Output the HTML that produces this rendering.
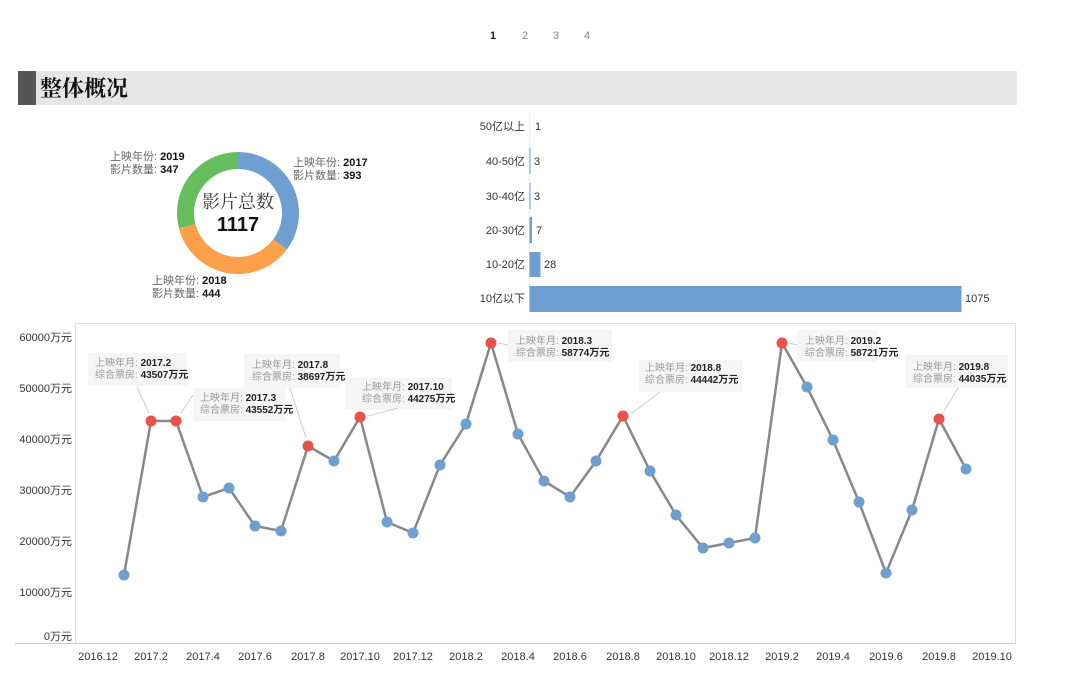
<!DOCTYPE html>
<html><head><meta charset="utf-8"><style>
html,body{margin:0;padding:0;background:#fff;width:1080px;height:685px;overflow:hidden}
svg{display:block;font-family:"Liberation Sans","Noto Sans CJK SC",sans-serif}
.ab text{font-size:10px}
</style></head><body>
<svg width="1080" height="685" viewBox="0 0 1080 685">
<g font-size="11" fill="#555" text-anchor="middle">
<text x="493" y="39" fill="#222" font-weight="bold">1</text>
<text x="525" y="39" fill="#888">2</text>
<text x="556" y="39" fill="#888">3</text>
<text x="587" y="39" fill="#888">4</text>
</g>
<rect x="18" y="71" width="999" height="34" fill="#e6e6e6"/>
<rect x="18" y="71" width="18" height="34" fill="#555"/>
<text x="40" y="96" font-size="22" font-weight="bold" fill="#111" font-family="'Noto Serif CJK SC','Liberation Serif',serif">整体概况</text>

<!-- donut -->
<g transform="translate(238,213)">
<path d="M0,-61 A61,61 0 0 1 48.8,36.6 L35.2,26.4 A44,44 0 0 0 0,-44 Z" fill="#6f9fd0"/>
<path d="M48.8,36.6 A61,61 0 0 1 -59.1,15.3 L-42.6,11.0 A44,44 0 0 0 35.2,26.4 Z" fill="#fda04c"/>
<path d="M-59.1,15.3 A61,61 0 0 1 0,-61 L0,-44 A44,44 0 0 0 -42.6,11.0 Z" fill="#66bd5e"/>
<text x="0" y="-5" text-anchor="middle" font-size="18" fill="#333" font-family="'Noto Serif CJK SC',serif">影片总数</text>
<text x="0" y="18" text-anchor="middle" font-size="20" font-weight="bold" fill="#111">1117</text>
</g>
<g font-size="11" fill="#666">
<text x="110" y="160">上映年份: <tspan fill="#111" font-weight="bold">2019</tspan></text>
<text x="110" y="173">影片数量: <tspan fill="#111" font-weight="bold">347</tspan></text>
<text x="293" y="166">上映年份: <tspan fill="#111" font-weight="bold">2017</tspan></text>
<text x="293" y="179">影片数量: <tspan fill="#111" font-weight="bold">393</tspan></text>
<text x="152" y="284">上映年份: <tspan fill="#111" font-weight="bold">2018</tspan></text>
<text x="152" y="297">影片数量: <tspan fill="#111" font-weight="bold">444</tspan></text>
</g>

<!-- bars -->
<g font-size="11" fill="#333">
<line x1="529.5" y1="112" x2="529.5" y2="314" stroke="#eee"/>
<text x="525" y="130" text-anchor="end">50亿以上</text><text x="535" y="130">1</text>
<rect x="529.5" y="148" width="1" height="26" fill="#6f9fd0"/>
<text x="525" y="165" text-anchor="end">40-50亿</text><text x="534" y="165">3</text>
<rect x="529.5" y="183" width="1" height="26" fill="#6f9fd0"/>
<text x="525" y="200" text-anchor="end">30-40亿</text><text x="534" y="200">3</text>
<rect x="529.5" y="217" width="2.5" height="26" fill="#6f9fd0"/>
<text x="525" y="234" text-anchor="end">20-30亿</text><text x="536" y="234">7</text>
<rect x="529.5" y="252" width="11" height="25" fill="#6f9fd0"/>
<text x="525" y="268" text-anchor="end">10-20亿</text><text x="544" y="268">28</text>
<rect x="529.5" y="286" width="432" height="26" fill="#6f9fd0"/>
<text x="525" y="302" text-anchor="end">10亿以下</text><text x="965" y="302">1075</text>
</g>

<!-- line chart frame -->
<rect x="75.5" y="323.5" width="940" height="320" fill="none" stroke="#ddd"/>
<line x1="15" y1="643.5" x2="1016" y2="643.5" stroke="#ccc"/>
<g font-size="11" fill="#333" text-anchor="end">
<text x="72" y="341">60000万元</text>
<text x="72" y="392">50000万元</text>
<text x="72" y="443">40000万元</text>
<text x="72" y="494">30000万元</text>
<text x="72" y="545">20000万元</text>
<text x="72" y="596">10000万元</text>
<text x="72" y="640">0万元</text>
</g>
<g font-size="11" fill="#333" text-anchor="middle">
<text x="98" y="660">2016.12</text><text x="151" y="660">2017.2</text><text x="203" y="660">2017.4</text>
<text x="255" y="660">2017.6</text><text x="308" y="660">2017.8</text><text x="360" y="660">2017.10</text>
<text x="413" y="660">2017.12</text><text x="466" y="660">2018.2</text><text x="518" y="660">2018.4</text>
<text x="570" y="660">2018.6</text><text x="623" y="660">2018.8</text><text x="676" y="660">2018.10</text>
<text x="729" y="660">2018.12</text><text x="782" y="660">2019.2</text><text x="833" y="660">2019.4</text>
<text x="886" y="660">2019.6</text><text x="939" y="660">2019.8</text><text x="992" y="660">2019.10</text>
</g>

<!-- annotation boxes -->
<g fill="#f5f5f5">
<rect x="88" y="353" width="99" height="33"/><rect x="193" y="388" width="92" height="33"/>
<rect x="244" y="354" width="96" height="34"/><rect x="345" y="378" width="107" height="32"/>
<rect x="508" y="330" width="104" height="32"/><rect x="638" y="360" width="104" height="32"/>
<rect x="797" y="330" width="80" height="32"/><rect x="905" y="355" width="103" height="33"/>
</g>
<g stroke="#ccc" fill="none">
<line x1="137" y1="387" x2="149" y2="413"/><line x1="193" y1="395" x2="181" y2="413"/>
<line x1="290" y1="388" x2="306" y2="438"/><line x1="398" y1="408" x2="368" y2="416"/>
<line x1="508" y1="345" x2="498" y2="343"/><line x1="660" y1="392" x2="631" y2="414"/>
<line x1="797" y1="345" x2="789" y2="343"/><line x1="958" y1="388" x2="944" y2="411"/>
</g>
<g class="ab" fill="#999">
<text x="95" y="366">上映年月: <tspan fill="#222" font-weight="bold">2017.2</tspan></text>
<text x="95" y="378">综合票房: <tspan fill="#222" font-weight="bold">43507万元</tspan></text>
<text x="200" y="401">上映年月: <tspan fill="#222" font-weight="bold">2017.3</tspan></text>
<text x="200" y="413">综合票房: <tspan fill="#222" font-weight="bold">43552万元</tspan></text>
<text x="252" y="368">上映年月: <tspan fill="#222" font-weight="bold">2017.8</tspan></text>
<text x="252" y="380">综合票房: <tspan fill="#222" font-weight="bold">38697万元</tspan></text>
<text x="362" y="390">上映年月: <tspan fill="#222" font-weight="bold">2017.10</tspan></text>
<text x="362" y="402">综合票房: <tspan fill="#222" font-weight="bold">44275万元</tspan></text>
<text x="516" y="344">上映年月: <tspan fill="#222" font-weight="bold">2018.3</tspan></text>
<text x="516" y="356">综合票房: <tspan fill="#222" font-weight="bold">58774万元</tspan></text>
<text x="645" y="371">上映年月: <tspan fill="#222" font-weight="bold">2018.8</tspan></text>
<text x="645" y="383">综合票房: <tspan fill="#222" font-weight="bold">44442万元</tspan></text>
<text x="805" y="344">上映年月: <tspan fill="#222" font-weight="bold">2019.2</tspan></text>
<text x="805" y="356">综合票房: <tspan fill="#222" font-weight="bold">58721万元</tspan></text>
<text x="913" y="370">上映年月: <tspan fill="#222" font-weight="bold">2019.8</tspan></text>
<text x="913" y="382">综合票房: <tspan fill="#222" font-weight="bold">44035万元</tspan></text>
</g>

<polyline fill="none" stroke="#888" stroke-width="2.5" points="124,575 151,421 176,421 203,497 229,488 255,526 281,531 308,446 334,461 360,417 387,522 413,533 440,465 466,424 491,343 518,434 544,481 570,497 596,461 623,416 650,471 676,515 703,548 729,543 755,538 782,343 807,387 833,440 859,502 886,573 912,510 939,419 966,469"/>
<g fill="#6f9fd0">
<circle cx="124" cy="575" r="5.5"/><circle cx="203" cy="497" r="5.5"/><circle cx="229" cy="488" r="5.5"/>
<circle cx="255" cy="526" r="5.5"/><circle cx="281" cy="531" r="5.5"/><circle cx="334" cy="461" r="5.5"/>
<circle cx="387" cy="522" r="5.5"/><circle cx="413" cy="533" r="5.5"/><circle cx="440" cy="465" r="5.5"/>
<circle cx="466" cy="424" r="5.5"/><circle cx="518" cy="434" r="5.5"/><circle cx="544" cy="481" r="5.5"/>
<circle cx="570" cy="497" r="5.5"/><circle cx="596" cy="461" r="5.5"/><circle cx="650" cy="471" r="5.5"/>
<circle cx="676" cy="515" r="5.5"/><circle cx="703" cy="548" r="5.5"/><circle cx="729" cy="543" r="5.5"/>
<circle cx="755" cy="538" r="5.5"/><circle cx="807" cy="387" r="5.5"/><circle cx="833" cy="440" r="5.5"/>
<circle cx="859" cy="502" r="5.5"/><circle cx="886" cy="573" r="5.5"/><circle cx="912" cy="510" r="5.5"/>
<circle cx="966" cy="469" r="5.5"/>
</g>
<g fill="#e8524a">
<circle cx="151" cy="421" r="5.5"/><circle cx="176" cy="421" r="5.5"/><circle cx="308" cy="446" r="5.5"/>
<circle cx="360" cy="417" r="5.5"/><circle cx="491" cy="343" r="5.5"/><circle cx="623" cy="416" r="5.5"/>
<circle cx="782" cy="343" r="5.5"/><circle cx="939" cy="419" r="5.5"/>
</g>
</svg>
</body></html>
